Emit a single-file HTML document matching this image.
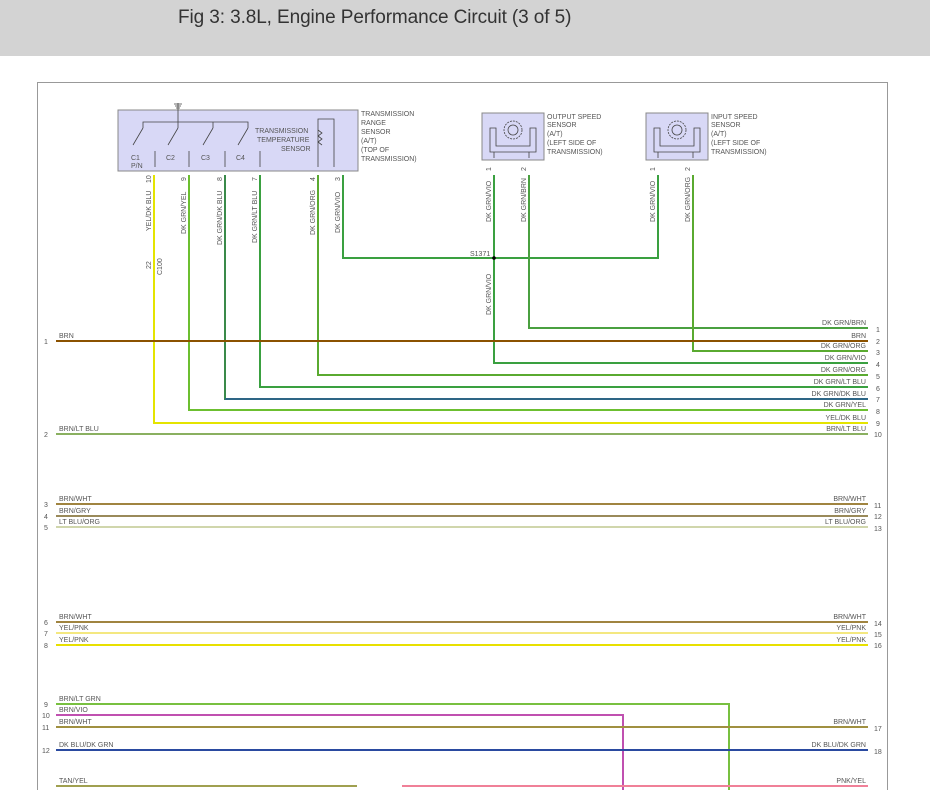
<!DOCTYPE html>
<html><head><meta charset="utf-8"><style>
html,body{margin:0;padding:0;background:#fff;width:930px;height:810px;overflow:hidden}
.hdr{position:absolute;left:0;top:0;width:930px;height:56px;background:#d3d3d3}
.hdr span{position:absolute;left:178px;top:7px;font:19px "Liberation Sans",sans-serif;color:#333;letter-spacing:-0.1px}
svg{position:absolute;left:0;top:0}
text{font-family:"Liberation Sans",sans-serif;font-size:7px;fill:#555}
</style></head><body>
<div class="hdr"><span>Fig 3: 3.8L, Engine Performance Circuit (3 of 5)</span></div>
<svg width="930" height="810" viewBox="0 0 930 810">
<path d="M37.5 790V82.5H887.5V790" fill="none" stroke="#999" stroke-width="1"/>
<rect x="118" y="110" width="240" height="61" fill="#d8d8f6" stroke="#888"/>
<g stroke="#444" stroke-width="0.8" fill="none">
<path d="M178 103v18M174 104h8M175 106h6M176 108h4"/>
<path d="M143 128v-6h105v6M178 121v7M213 122v6"/>
<path d="M143 128l-10 17M178 128l-10 17M213 128l-10 17M248 128l-10 17"/>
<path d="M155 151v16M189 151v16M225 151v16M260 151v16"/>
<path d="M318 167v-48h16v48M318 130l4 3-4 3 4 3-4 3 4 3"/>
</g>
<text x="131" y="160">C1</text><text x="131" y="168">P/N</text>
<text x="166" y="160">C2</text><text x="201" y="160">C3</text><text x="236" y="160">C4</text>
<text x="255" y="133">TRANSMISSION</text><text x="257" y="142">TEMPERATURE</text><text x="281" y="151">SENSOR</text>
<text x="361" y="116">TRANSMISSION</text><text x="361" y="125">RANGE</text><text x="361" y="134">SENSOR</text><text x="361" y="143">(A/T)</text><text x="361" y="152">(TOP OF</text><text x="361" y="161">TRANSMISSION)</text>
<rect x="482" y="113" width="62" height="47" fill="#d8d8f6" stroke="#888"/>
<g stroke="#444" stroke-width="0.8" fill="none">
<circle cx="513" cy="130" r="9" stroke-dasharray="2 1"/><circle cx="513" cy="130" r="5"/>
<path d="M490 152v-24h6v18h34v-18h6v24z"/><path d="M494 152v6M529 152v6"/>
</g>
<text x="547" y="119">OUTPUT SPEED</text><text x="547" y="127">SENSOR</text><text x="547" y="136">(A/T)</text><text x="547" y="145">(LEFT SIDE OF</text><text x="547" y="154">TRANSMISSION)</text>
<rect x="646" y="113" width="62" height="47" fill="#d8d8f6" stroke="#888"/>
<g stroke="#444" stroke-width="0.8" fill="none">
<circle cx="677" cy="130" r="9" stroke-dasharray="2 1"/><circle cx="677" cy="130" r="5"/>
<path d="M654 152v-24h6v18h34v-18h6v24z"/><path d="M658 152v6M693 152v6"/>
</g>
<text x="711" y="119">INPUT SPEED</text><text x="711" y="127">SENSOR</text><text x="711" y="136">(A/T)</text><text x="711" y="145">(LEFT SIDE OF</text><text x="711" y="154">TRANSMISSION)</text>
<g fill="none" stroke-width="2">
<path d="M154 175V423H868" stroke="#e4e400"/>
<path d="M189 175V410H868" stroke="#6cbf30"/>
<path d="M225 175V399H868" stroke="#3a8a4a"/>
<path d="M225 399H868" stroke="#2a5a9a" stroke-width="1.5"/>
<path d="M260 175V387H868" stroke="#3aa040"/>
<path d="M318 175V375H868" stroke="#5aaa30"/>
<path d="M343 175V258H658V175" stroke="#3aa040"/>
<path d="M494 175V363H868" stroke="#3aa040"/>
<path d="M529 175V328H868" stroke="#4aa040"/>
<path d="M693 175V351H868" stroke="#5aaa30"/>
<path d="M56 341H868" stroke="#8b5200"/>
<path d="M56 434H868" stroke="#8ab060"/>
<path d="M56 504H868" stroke="#a08440"/>
<path d="M56 516H868" stroke="#9a8a5a"/>
<path d="M56 527H868" stroke="#c0c890" stroke-width="1.5"/>
<path d="M56 622H868" stroke="#a08440"/>
<path d="M56 633H868" stroke="#f4e880"/>
<path d="M56 645H868" stroke="#e8e000"/>
<path d="M56 704H729V790" stroke="#78c040"/>
<path d="M56 715H623V790" stroke="#c050b0"/>
<path d="M56 727H868" stroke="#a09040"/>
<path d="M56 750H868" stroke="#2a4aa0"/>
<path d="M56 786H357" stroke="#a0a050"/>
<path d="M402 786H868" stroke="#f08098"/>
</g>
<circle cx="494" cy="258" r="1.8" fill="#000"/>
<text x="470" y="256">S1371</text>
<g>
<text transform="translate(151,231) rotate(-90)">YEL/DK BLU</text>
<text transform="translate(186,234) rotate(-90)">DK GRN/YEL</text>
<text transform="translate(222,245) rotate(-90)">DK GRN/DK BLU</text>
<text transform="translate(257,243) rotate(-90)">DK GRN/LT BLU</text>
<text transform="translate(315,235) rotate(-90)">DK GRN/ORG</text>
<text transform="translate(340,233) rotate(-90)">DK GRN/VIO</text>
<text transform="translate(491,222) rotate(-90)">DK GRN/VIO</text>
<text transform="translate(526,222) rotate(-90)">DK GRN/BRN</text>
<text transform="translate(655,222) rotate(-90)">DK GRN/VIO</text>
<text transform="translate(690,222) rotate(-90)">DK GRN/ORG</text>
<text transform="translate(491,315) rotate(-90)">DK GRN/VIO</text>
<text transform="translate(151,183) rotate(-90)">10</text>
<text transform="translate(186,181) rotate(-90)">9</text>
<text transform="translate(222,181) rotate(-90)">8</text>
<text transform="translate(257,181) rotate(-90)">7</text>
<text transform="translate(315,181) rotate(-90)">4</text>
<text transform="translate(340,181) rotate(-90)">3</text>
<text transform="translate(491,171) rotate(-90)">1</text>
<text transform="translate(526,171) rotate(-90)">2</text>
<text transform="translate(655,171) rotate(-90)">1</text>
<text transform="translate(690,171) rotate(-90)">2</text>
<text transform="translate(151,269) rotate(-90)">22</text>
<text transform="translate(162,275) rotate(-90)">C100</text>
</g>
<g>
<text x="59" y="338">BRN</text><text x="44" y="344">1</text>
<text x="59" y="431">BRN/LT BLU</text><text x="44" y="437">2</text>
<text x="59" y="501">BRN/WHT</text><text x="44" y="507">3</text>
<text x="59" y="513">BRN/GRY</text><text x="44" y="519">4</text>
<text x="59" y="524">LT BLU/ORG</text><text x="44" y="530">5</text>
<text x="59" y="619">BRN/WHT</text><text x="44" y="625">6</text>
<text x="59" y="630">YEL/PNK</text><text x="44" y="636">7</text>
<text x="59" y="642">YEL/PNK</text><text x="44" y="648">8</text>
<text x="59" y="701">BRN/LT GRN</text><text x="44" y="707">9</text>
<text x="59" y="712">BRN/VIO</text><text x="42" y="718">10</text>
<text x="59" y="724">BRN/WHT</text><text x="42" y="730">11</text>
<text x="59" y="747">DK BLU/DK GRN</text><text x="42" y="753">12</text>
<text x="59" y="783">TAN/YEL</text>
</g>
<g text-anchor="end">
<text x="866" y="325">DK GRN/BRN</text>
<text x="866" y="338">BRN</text>
<text x="866" y="348">DK GRN/ORG</text>
<text x="866" y="360">DK GRN/VIO</text>
<text x="866" y="372">DK GRN/ORG</text>
<text x="866" y="384">DK GRN/LT BLU</text>
<text x="866" y="396">DK GRN/DK BLU</text>
<text x="866" y="407">DK GRN/YEL</text>
<text x="866" y="420">YEL/DK BLU</text>
<text x="866" y="431">BRN/LT BLU</text>
<text x="866" y="501">BRN/WHT</text>
<text x="866" y="513">BRN/GRY</text>
<text x="866" y="524">LT BLU/ORG</text>
<text x="866" y="619">BRN/WHT</text>
<text x="866" y="630">YEL/PNK</text>
<text x="866" y="642">YEL/PNK</text>
<text x="866" y="724">BRN/WHT</text>
<text x="866" y="747">DK BLU/DK GRN</text>
<text x="866" y="783">PNK/YEL</text>
</g>
<g>
<text x="876" y="332">1</text><text x="876" y="344">2</text><text x="876" y="355">3</text><text x="876" y="367">4</text><text x="876" y="379">5</text><text x="876" y="391">6</text><text x="876" y="402">7</text><text x="876" y="414">8</text><text x="876" y="426">9</text><text x="874" y="437">10</text>
<text x="874" y="508">11</text><text x="874" y="519">12</text><text x="874" y="531">13</text>
<text x="874" y="626">14</text><text x="874" y="637">15</text><text x="874" y="648">16</text>
<text x="874" y="731">17</text><text x="874" y="754">18</text>
</g>
</svg>
</body></html>
